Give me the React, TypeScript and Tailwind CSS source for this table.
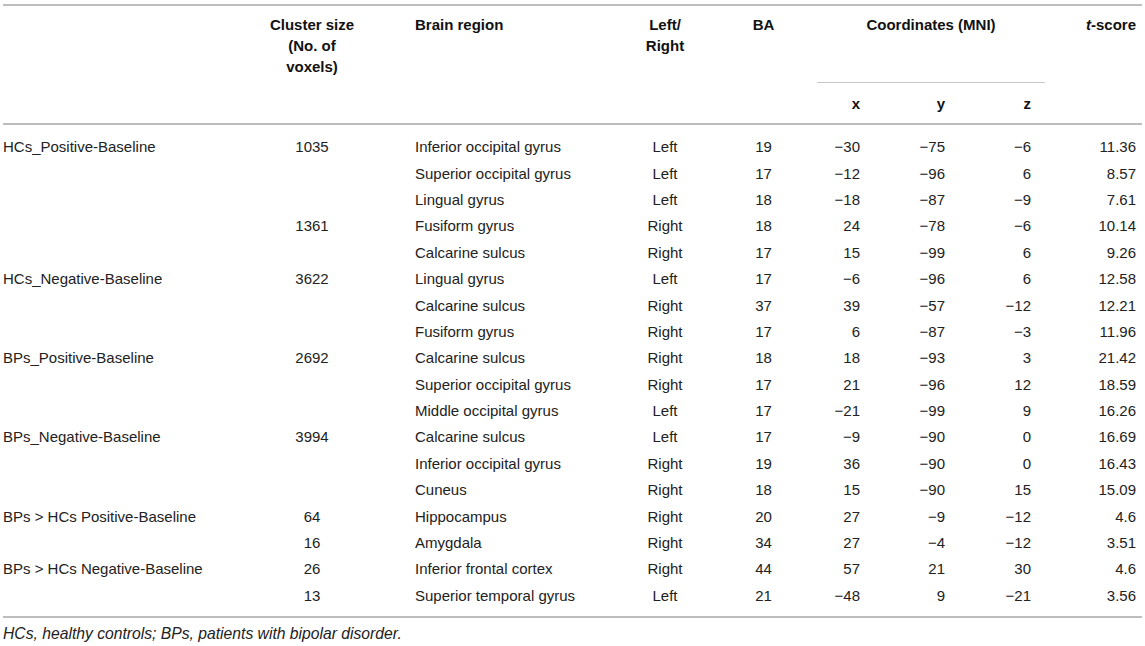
import React from "react";

const M = "\u2212";
type Row = [string, string, string, string, string, string, string, string, string];
const rows: Row[] = [
  ["HCs_Positive-Baseline", "1035", "Inferior occipital gyrus", "Left", "19", M + "30", M + "75", M + "6", "11.36"],
  ["", "", "Superior occipital gyrus", "Left", "17", M + "12", M + "96", "6", "8.57"],
  ["", "", "Lingual gyrus", "Left", "18", M + "18", M + "87", M + "9", "7.61"],
  ["", "1361", "Fusiform gyrus", "Right", "18", "24", M + "78", M + "6", "10.14"],
  ["", "", "Calcarine sulcus", "Right", "17", "15", M + "99", "6", "9.26"],
  ["HCs_Negative-Baseline", "3622", "Lingual gyrus", "Left", "17", M + "6", M + "96", "6", "12.58"],
  ["", "", "Calcarine sulcus", "Right", "37", "39", M + "57", M + "12", "12.21"],
  ["", "", "Fusiform gyrus", "Right", "17", "6", M + "87", M + "3", "11.96"],
  ["BPs_Positive-Baseline", "2692", "Calcarine sulcus", "Right", "18", "18", M + "93", "3", "21.42"],
  ["", "", "Superior occipital gyrus", "Right", "17", "21", M + "96", "12", "18.59"],
  ["", "", "Middle occipital gyrus", "Left", "17", M + "21", M + "99", "9", "16.26"],
  ["BPs_Negative-Baseline", "3994", "Calcarine sulcus", "Left", "17", M + "9", M + "90", "0", "16.69"],
  ["", "", "Inferior occipital gyrus", "Right", "19", "36", M + "90", "0", "16.43"],
  ["", "", "Cuneus", "Right", "18", "15", M + "90", "15", "15.09"],
  ["BPs > HCs Positive-Baseline", "64", "Hippocampus", "Right", "20", "27", M + "9", M + "12", "4.6"],
  ["", "16", "Amygdala", "Right", "34", "27", M + "4", M + "12", "3.51"],
  ["BPs > HCs Negative-Baseline", "26", "Inferior frontal cortex", "Right", "44", "57", "21", "30", "4.6"],
  ["", "13", "Superior temporal gyrus", "Left", "21", M + "48", "9", M + "21", "3.56"],
];

const cols = "grid grid-cols-[257px_104px_256px_90px_107px_53px_85px_90px_97px]";

export default function App() {
  return (
    <div
      className="w-[1145px] h-[646px] bg-white overflow-hidden pl-[3px] pr-[3px] pt-[4px] text-[15px] text-[#222]"
      style={{ fontFamily: '"Liberation Sans", Arial, sans-serif' }}
    >
      <div className="w-[1139px]">
        <div className="h-[2px] bg-[#bdbdbd]" />
        {/* Header */}
        <div className={cols + " grid-rows-[77px_40px] font-bold text-[#111] leading-[21px]"}>
          <div className="row-span-2" />
          <div className="row-span-2 pt-[8px] text-center">
            Cluster size
            <br />
            (No. of
            <br />
            voxels)
          </div>
          <div className="row-span-2 pt-[8px] pl-[51px]">Brain region</div>
          <div className="row-span-2 pt-[8px] text-center">
            Left/
            <br />
            Right
          </div>
          <div className="row-span-2 pt-[8px] text-center">BA</div>
          <div className="col-span-3 pt-[8px] text-center border-b border-[#c8c8c8]">Coordinates (MNI)</div>
          <div className="row-span-2 pt-[8px] text-right pr-[6px]">
            <span className="italic">t</span>-score
          </div>
          <div className="flex items-center justify-end pr-[10px]">x</div>
          <div className="flex items-center justify-end pr-[10px]">y</div>
          <div className="flex items-center justify-end pr-[14px]">z</div>
        </div>
        <div className="h-[2px] bg-[#bdbdbd]" />
        {/* Body */}
        <div className="pt-[9px] pb-[7px]">
          {rows.map((r, i) => (
            <div key={i} className={cols + " h-[26.4px] items-center leading-[18px]"}>
              <div className="whitespace-nowrap">{r[0]}</div>
              <div className="text-center">{r[1]}</div>
              <div className="pl-[51px] whitespace-nowrap">{r[2]}</div>
              <div className="text-center">{r[3]}</div>
              <div className="text-center">{r[4]}</div>
              <div className="text-right pr-[10px]">{r[5]}</div>
              <div className="text-right pr-[10px]">{r[6]}</div>
              <div className="text-right pr-[14px]">{r[7]}</div>
              <div className="text-right pr-[6px]">{r[8]}</div>
            </div>
          ))}
        </div>
        <div className="h-[2px] bg-[#bdbdbd]" />
        <div className="pt-[7px] italic leading-[18px] text-[15.7px]">
          HCs, healthy controls; BPs, patients with bipolar disorder.
        </div>
      </div>
    </div>
  );
}
